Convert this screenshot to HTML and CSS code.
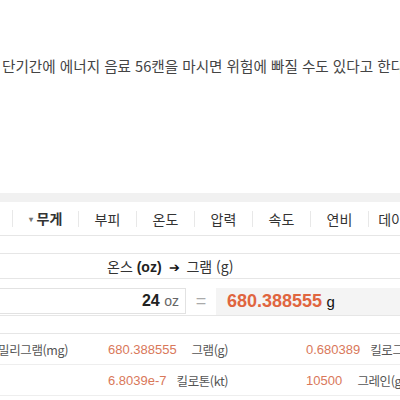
FILE: index.html
```html
<!DOCTYPE html>
<html lang="ko">
<head>
<meta charset="utf-8">
<link rel="stylesheet" href="styles.css">
</head>
<body>
<p class="sentence">단기간에 에너지 음료 56캔을 마시면 위험에 빠질 수도 있다고 한다</p>
<div class="converter">
  <div class="band"></div>
  <nav class="tabs">
    <span class="tab">길이</span>
    <span class="tab tab-active"><span class="caret">▾</span>무게</span>
    <span class="tab">부피</span>
    <span class="tab">온도</span>
    <span class="tab">압력</span>
    <span class="tab">속도</span>
    <span class="tab">연비</span>
    <span class="tab">데이터</span>
  </nav>
  <div class="panel">
    <div class="title">온스 <b>(oz)</b> <span class="arrow">➔</span> 그램 (g)</div>
    <div class="calc">
      <div class="input"><span class="num">24</span> <span class="unit">oz</span></div>
      <span class="eq">=</span>
      <div class="result"><span class="res-num">680.388555</span> <span class="res-unit">g</span></div>
    </div>
    <div class="spacer"></div>
    <div class="grid">
      <div class="cell"><span class="val">680388.555</span><span class="lab">밀리그램(mg)</span></div>
      <div class="cell"><span class="val">680.388555</span><span class="lab">그램(g)</span></div>
      <div class="cell"><span class="val">0.680389</span><span class="lab">킬로그램(kg)</span></div>
      <div class="cell"><span class="val"></span><span class="lab"></span></div>
      <div class="cell"><span class="val">6.8039e-7</span><span class="lab">킬로톤(kt)</span></div>
      <div class="cell"><span class="val">10500</span><span class="lab">그레인(grain)</span></div>
    </div>
  </div>
</div>
</body>
</html>
```
FILE: styles.css
```css
html, body {
  margin: 0;
  padding: 0;
  background: #fff;
  overflow: hidden;
}
body {
  font-family: "Noto Sans CJK KR", "Noto Sans", sans-serif;
  color: #333;
  width: 400px;
}
.sentence {
  margin: 56px 0 0 2px;
  font-size: 14.6px;
  line-height: 20px;
  white-space: nowrap;
  color: #444;
}
.converter {
  margin-top: 117px;
  width: 600px;
}
.band {
  height: 9px;
  background: #f1f1f1;
}
.tabs {
  display: flex;
  height: 33px;
  align-items: center;
  border-bottom: 1px solid #e6e6e6;
  margin-left: -45px;
  font-size: 14px;
}
.tab {
  width: 57px;
  text-align: center;
  color: #333;
  line-height: 16px;
}
.tab + .tab {
  border-left: 1px solid #e8e8e8;
}
.tab-active {
  width: 65px;
  font-weight: bold;
}
.caret {
  font-size: 8px;
  color: #777;
  margin-right: 4px;
  vertical-align: 2px;
}
.panel {
  margin-top: 17px;
  border-top: 1px solid #e6e6e6;
}
.title {
  height: 24px;
  line-height: 24px;
  border-bottom: 1px solid #e6e6e6;
  font-size: 14px;
  padding-left: 107px;
  color: #333;
}
.title b {
  font-family: "Liberation Sans", sans-serif;
  font-weight: bold;
  color: #222;
}
.arrow {
  font-size: 13px;
  margin: 0 3px;
  color: #111;
}
.calc {
  display: flex;
  align-items: center;
  height: 28px;
  padding: 8px 0 0;
  border-bottom: 1px solid #e6e6e6;
}
.input {
  margin-left: -20px;
  width: 206px;
  box-sizing: border-box;
  height: 26px;
  border: 1px solid #e2e2e2;
  text-align: right;
  padding-right: 6px;
  line-height: 24px;
  font-family: "Liberation Sans", sans-serif;
}
.num {
  font-size: 16px;
  font-weight: bold;
  color: #222;
}
.unit {
  font-size: 14px;
  color: #666;
}
.eq {
  width: 30px;
  text-align: center;
  color: #aaa;
  font-size: 18px;
  font-family: "Liberation Sans", sans-serif;
}
.result {
  flex: 1;
  height: 27px;
  background: #f4f4f4;
  padding-left: 11px;
  line-height: 27px;
  font-family: "Liberation Sans", sans-serif;
}
.res-num {
  font-size: 18px;
  font-weight: bold;
  color: #e0653f;
}
.res-unit {
  font-size: 15px;
  color: #111;
}
.spacer {
  height: 17px;
  border-bottom: 1px solid #e6e6e6;
}
.grid {
  display: grid;
  grid-template-columns: repeat(3, 198px);
  margin-left: -90px;
}
.cell {
  display: flex;
  align-items: center;
  height: 30px;
  padding-right: 78px;
  border-bottom: 1px solid #eeeeee;
  white-space: nowrap;
}
.cell:nth-child(3n+1) {
  padding-right: 40px;
}
.val {
  color: #d9785a;
  font-family: "Liberation Sans", sans-serif;
  font-size: 13px;
  margin-right: 10px;
  flex-shrink: 0;
}
.lab {
  margin-left: auto;
  color: #555;
  font-size: 12.5px;
  letter-spacing: -0.4px;
  flex-shrink: 0;
}
```
